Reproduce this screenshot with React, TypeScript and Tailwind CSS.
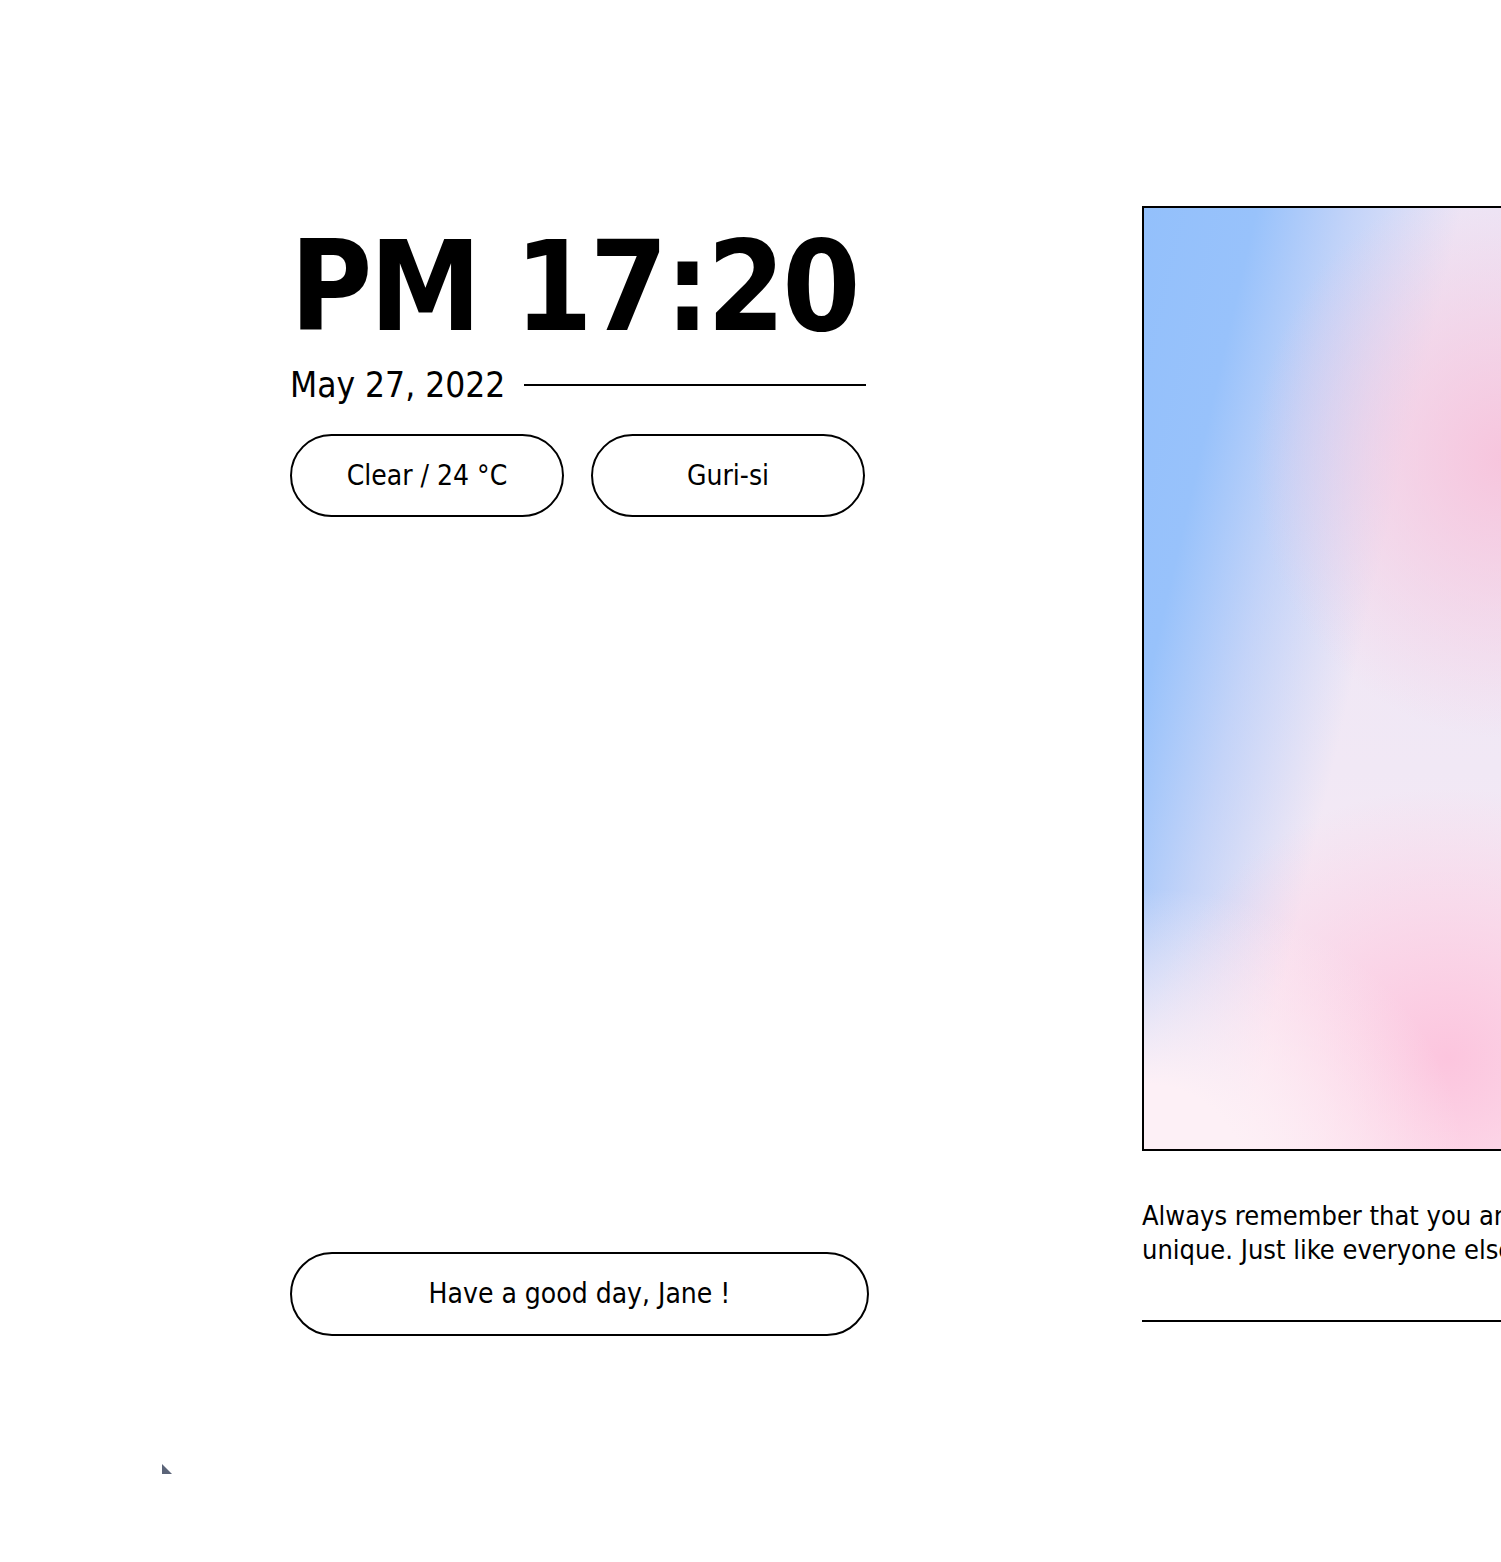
import React from "react";

const pill =
  "flex items-center justify-center rounded-full border-2 border-black text-[28px] text-black";

const App = () => {
  return (
    <div
      className="relative h-[1562px] w-[1501px] overflow-hidden bg-white text-black"
      style={{ fontFamily: '"DejaVu Sans Condensed", "DejaVu Sans", sans-serif' }}
    >
      <div className="flex pl-[290px] pt-[206px]">
        <div className="flex w-[579px] shrink-0 flex-col">
          <h1 className="mt-[18px] text-[125px] leading-[125px] font-bold tracking-[-3px] whitespace-nowrap">
            PM 17:20
          </h1>
          <div className="mt-[16px] flex items-center gap-[19px] pr-[3px]">
            <span className="text-[35px] leading-[40px]">May 27, 2022</span>
            <div className="h-[2px] flex-1 bg-black" />
          </div>
          <div className="mt-[29px] flex gap-[27px] pr-[4px]">
            <div className={pill + " h-[83px] flex-1"}>Clear / 24 °C</div>
            <div className={pill + " h-[83px] flex-1"}>Guri-si</div>
          </div>
          <div className={pill + " mt-[735px] h-[84px] w-full"}>Have a good day, Jane !</div>
        </div>

        <div className="ml-[273px] flex w-[580px] shrink-0 flex-col">
          <div className="h-[945px] border-2 border-black bg-[radial-gradient(ellipse_320px_280px_at_0px_960px,#fdf0f6_0%,#fdf0f6_30%,rgba(253,240,246,0)_100%),radial-gradient(ellipse_250px_280px_at_360px_250px,#f7c5dd_0%,rgba(247,197,221,0)_100%),radial-gradient(ellipse_300px_270px_at_305px_850px,#fcc5de_0%,rgba(252,197,222,0)_100%),linear-gradient(103deg,#93c0fb_0px,#98c2fb_110px,rgba(166,198,250,0.6)_200px,rgba(180,200,248,0)_310px),linear-gradient(180deg,#ece7f7_0%,#f1e8f5_60%,#fdeef5_100%)]" />
          <p className="mt-[48px] text-[27px] leading-[34px]">
            Always remember that you are absolutely unique. Just like everyone else.
          </p>
          <div className="mt-[53px] h-[2px] w-full bg-black" />
        </div>
      </div>

      <svg className="absolute left-[160px] top-[1462px]" width="14" height="14" viewBox="0 0 14 14">
        <path d="M2 2 L2 12 L12 12 Z" fill="#5b6478" />
      </svg>
    </div>
  );
};

export default App;
